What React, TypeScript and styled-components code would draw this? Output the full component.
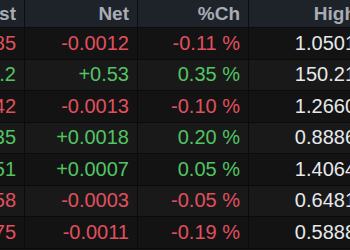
import React from 'react';
import styled, { createGlobalStyle } from 'styled-components';

const GlobalStyle = createGlobalStyle`
  html, body {
    margin: 0;
    padding: 0;
    background: #141414;
    overflow: hidden;
  }
`;

type Tone = 'up' | 'down' | 'flat';

const toneColor = (tone: Tone) => {
  if (tone === 'up') return '#52c463';
  if (tone === 'down') return '#e0505e';
  return '#e6e8ec';
};

const Board = styled.div`
  width: 350px;
  height: 250px;
  overflow: hidden;
  font-family: "Liberation Sans", Arial, sans-serif;
`;

const Grid = styled.div`
  display: grid;
  grid-template-columns: 25px 113px 111px 116px;
  grid-template-rows: 28px;
  grid-auto-rows: 31.5px;
  width: 365px;
`;

const HeadCell = styled.div`
  display: flex;
  align-items: center;
  justify-content: flex-end;
  overflow: hidden;
  white-space: nowrap;
  padding-right: 8px;
  background: #1e2229;
  border-right: 1px solid #0d0e11;
  border-bottom: 1px solid #0b0c0e;
  color: #a7acb5;
  font-size: 19px;
  font-weight: bold;
`;

const Cell = styled.div<{ tone: Tone; odd: boolean }>`
  display: flex;
  align-items: center;
  justify-content: flex-end;
  overflow: hidden;
  white-space: nowrap;
  padding-right: 8px;
  background: ${p => (p.odd ? '#19191a' : '#131313')};
  border-right: 1px solid #0b0b0c;
  border-bottom: 1px solid #0b0b0c;
  color: ${p => toneColor(p.tone)};
  font-size: 20px;
`;

interface Quote {
  last: string;
  net: string;
  pct: string;
  high: string;
}

const quotes: Quote[] = [
  { last: '1.0485', net: '-0.0012', pct: '-0.11 %', high: '1.0501' },
  { last: '150.2', net: '+0.53', pct: '0.35 %', high: '150.21' },
  { last: '1.2642', net: '-0.0013', pct: '-0.10 %', high: '1.2660' },
  { last: '0.8835', net: '+0.0018', pct: '0.20 %', high: '0.8886' },
  { last: '1.4051', net: '+0.0007', pct: '0.05 %', high: '1.4064' },
  { last: '0.6458', net: '-0.0003', pct: '-0.05 %', high: '0.6481' },
  { last: '0.5875', net: '-0.0011', pct: '-0.19 %', high: '0.5888' },
];

export default function App() {
  return (
    <Board>
      <GlobalStyle />
      <Grid>
        <HeadCell>Last</HeadCell>
        <HeadCell>Net</HeadCell>
        <HeadCell>%Ch</HeadCell>
        <HeadCell>High</HeadCell>
        {quotes.map((q, i) => {
          const tone: Tone = q.net.startsWith('-') ? 'down' : 'up';
          const odd = i % 2 === 1;
          return (
            <React.Fragment key={i}>
              <Cell tone={tone} odd={odd}>{q.last}</Cell>
              <Cell tone={tone} odd={odd}>{q.net}</Cell>
              <Cell tone={tone} odd={odd}>{q.pct}</Cell>
              <Cell tone="flat" odd={odd}>{q.high}</Cell>
            </React.Fragment>
          );
        })}
      </Grid>
    </Board>
  );
}
